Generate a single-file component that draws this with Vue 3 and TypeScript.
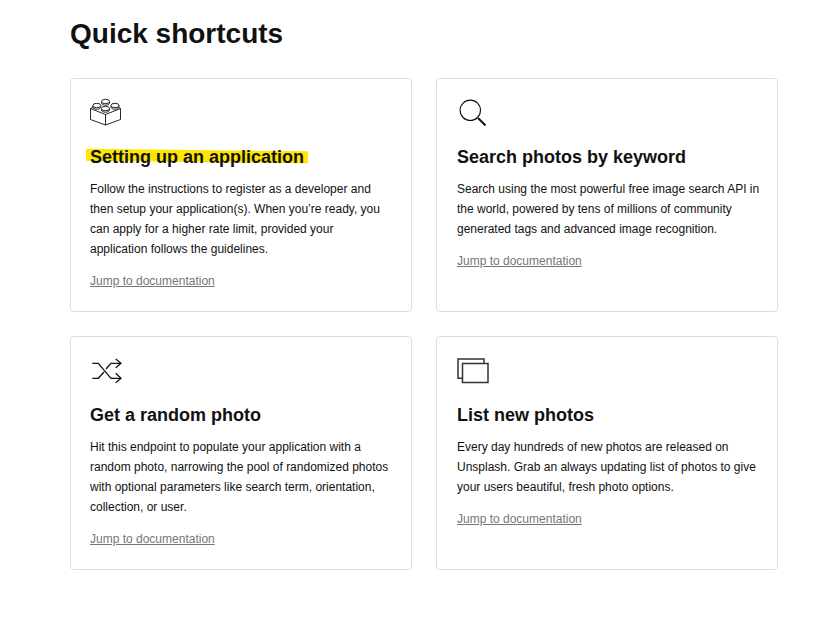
<script setup lang="ts">
interface Card { title: string; lines: string[]; icon: string; highlight?: boolean }
const cards: Card[] = [
  { title: 'Setting up an application', icon: 'lego', highlight: true, lines: ['Follow the instructions to register as a developer and', 'then setup your application(s). When you’re ready, you', 'can apply for a higher rate limit, provided your', 'application follows the guidelines.'] },
  { title: 'Search photos by keyword', icon: 'search', lines: ['Search using the most powerful free image search API in', 'the world, powered by tens of millions of community', 'generated tags and advanced image recognition.'] },
  { title: 'Get a random photo', icon: 'shuffle', lines: ['Hit this endpoint to populate your application with a', 'random photo, narrowing the pool of randomized photos', 'with optional parameters like search term, orientation,', 'collection, or user.'] },
  { title: 'List new photos', icon: 'list', lines: ['Every day hundreds of new photos are released on', 'Unsplash. Grab an always updating list of photos to give', 'your users beautiful, fresh photo options.'] },
]
</script>

<template>
  <main class="page">
    <h1 class="heading">Quick shortcuts</h1>
    <div class="grid">
      <article v-for="card in cards" :key="card.title" class="card">
        <svg class="icon" width="32" height="32" viewBox="0 0 32 32" fill="none" stroke="#111" stroke-width="1">
          <g v-if="card.icon === 'lego'" stroke-width="0.9">
            <path d="M0.5 10.5v11l15 5.5 15-5.5v-11" />
            <path d="M0.5 10.5l15 6 15-6M15.5 16.5V27" />
            <path d="M0.5 10.5l5-2.5M30.5 10.5l-5-2.5" />
            <path d="M11.5 3.5v1.5c0 1.3 1.8 2.2 4 2.2s4-.9 4-2.2V3.5" fill="#fff" />
            <ellipse cx="15.5" cy="3.5" rx="4" ry="2.2" fill="#fff" />
            <path d="M2.8 7.5v1.5c0 1.3 1.8 2.2 4 2.2s4-.9 4-2.2V7.5" fill="#fff" />
            <ellipse cx="6.8" cy="7.5" rx="4" ry="2.2" fill="#fff" />
            <path d="M21 7.5v1.5c0 1.3 1.8 2.2 4 2.2s4-.9 4-2.2V7.5" fill="#fff" />
            <ellipse cx="25" cy="7.5" rx="4" ry="2.2" fill="#fff" />
            <path d="M11.5 10.5v1.5c0 1.3 1.8 2.2 4 2.2s4-.9 4-2.2v-1.5" fill="#fff" />
            <ellipse cx="15.5" cy="10.5" rx="4" ry="2.2" fill="#fff" />
          </g>
          <g v-else-if="card.icon === 'search'">
            <circle cx="13.3" cy="12.3" r="10.2" stroke-width="1.1" />
            <path d="M20.5 19.5l1.5 1.5" stroke-width="1.1" />
            <path d="M21.5 20.5l7 7" stroke-width="2" />
          </g>
          <g v-else-if="card.icon === 'shuffle'">
            <path d="M2.3 7.3h6L21 22.3h9" stroke-width="1.3" />
            <path d="M2.3 22.3h6l5.7-6.3M16 13l5-5.7h9" stroke-width="1.3" />
            <path d="M25.7 3l5.3 4.3-5.3 4.4M25.7 17.3l5.3 5-5.3 4.4" stroke-width="1.3" />
          </g>
          <g v-else>
            <path d="M5.5 22.3H1V3h26v4.5" stroke="#333" stroke-width="1.5" />
            <rect x="5.5" y="7.5" width="25.5" height="19" stroke="#333" stroke-width="1.5" />
          </g>
        </svg>
        <h2 class="title" :class="{ marked: card.highlight }"><span>{{ card.title }}</span></h2>
        <p class="body"><span v-for="line in card.lines" :key="line" class="line">{{ line }}</span></p>
        <a class="link" href="#" @click.prevent>Jump to documentation</a>
      </article>
    </div>
  </main>
</template>

<style>
html, body { background: #fff; }
</style>

<style scoped>
.page {
  width: 708px;
  margin-left: 70px;
  padding-top: 16px;
  font-family: "Liberation Sans", Arial, sans-serif;
  color: #111;
}
.heading {
  margin: 0 0 27px;
  font-size: 28px;
  line-height: 35px;
  font-weight: 700;
}
.grid {
  display: grid;
  grid-template-columns: 342px 342px;
  grid-auto-rows: 234px;
  gap: 24px;
}
.card {
  box-sizing: border-box;
  border: 1px solid #ddd;
  border-radius: 4px;
  padding: 19px;
  display: flex;
  flex-direction: column;
  align-items: flex-start;
}
.card:nth-child(even) { padding-left: 20px; }
.icon { display: block; flex: none; }
.title {
  position: relative;
  margin: 15px 0 0;
  font-size: 18px;
  line-height: 24px;
  font-weight: 700;
  height: 24px;
  white-space: nowrap;
}
.title span { position: relative; }
.marked::before {
  content: "";
  position: absolute;
  left: -4px;
  right: -4px;
  top: 5px;
  height: 12px;
  background: #ffe600;
  transform: rotate(0.7deg);
}
.body {
  margin: 10px 0 0;
  font-size: 12px;
  line-height: 20px;
  color: #111;
}
.line { display: block; white-space: nowrap; }
.link {
  margin-top: 12px;
  font-size: 12px;
  line-height: 20px;
  color: #767676;
  text-decoration: underline;
}
</style>
